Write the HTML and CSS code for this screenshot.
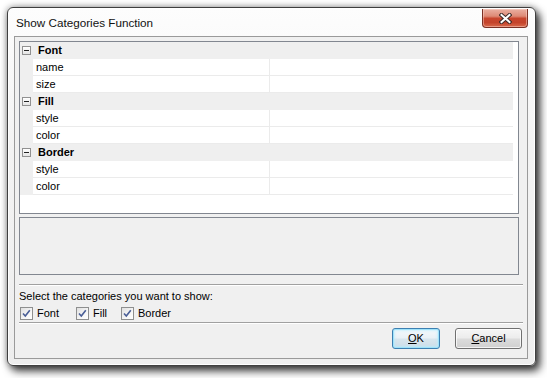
FILE: index.html
```html
<!DOCTYPE html>
<html>
<head>
<meta charset="utf-8">
<link rel="stylesheet" href="styles.css">
</head>
<body>
<div class="page">
  <div class="window">
    <div class="titlebar">
      <span class="title">Show Categories Function</span>
      <div class="close">
        <svg width="13" height="11" viewBox="0 0 13 11">
          <path d="M2.5 2 L10.5 9 M10.5 2 L2.5 9" stroke="#3b2a28" stroke-width="4" stroke-linecap="square" fill="none"/>
          <path d="M2.5 2 L10.5 9 M10.5 2 L2.5 9" stroke="#ffffff" stroke-width="2" stroke-linecap="square" fill="none"/>
        </svg>
      </div>
    </div>
    <div class="client">
      <div class="grid">
        <div class="cat"><span class="toggle"></span><span class="cat-label">Font</span></div>
        <div class="prop"><span class="gutter"></span><span class="pname">name</span><span class="pvalue"></span></div>
        <div class="prop"><span class="gutter"></span><span class="pname">size</span><span class="pvalue"></span></div>
        <div class="cat"><span class="toggle"></span><span class="cat-label">Fill</span></div>
        <div class="prop"><span class="gutter"></span><span class="pname">style</span><span class="pvalue"></span></div>
        <div class="prop"><span class="gutter"></span><span class="pname">color</span><span class="pvalue"></span></div>
        <div class="cat"><span class="toggle"></span><span class="cat-label">Border</span></div>
        <div class="prop"><span class="gutter"></span><span class="pname">style</span><span class="pvalue"></span></div>
        <div class="prop"><span class="gutter"></span><span class="pname">color</span><span class="pvalue"></span></div>
      </div>
      <div class="desc"></div>
      <div class="sep sep-top"></div>
      <div class="prompt">Select the categories you want to show:</div>
      <div class="checks">
        <label class="check check-font"><span class="box"><svg width="11" height="11" viewBox="0 0 11 11"><path d="M2 5.5 L4.3 8 L8.8 2.2" stroke="#4a5f97" stroke-width="1.6" fill="none"/></svg></span>Font</label>
        <label class="check check-fill"><span class="box"><svg width="11" height="11" viewBox="0 0 11 11"><path d="M2 5.5 L4.3 8 L8.8 2.2" stroke="#4a5f97" stroke-width="1.6" fill="none"/></svg></span>Fill</label>
        <label class="check check-border"><span class="box"><svg width="11" height="11" viewBox="0 0 11 11"><path d="M2 5.5 L4.3 8 L8.8 2.2" stroke="#4a5f97" stroke-width="1.6" fill="none"/></svg></span>Border</label>
      </div>
      <div class="sep sep-bottom"></div>
      <div class="buttons">
        <div class="btn btn-ok"><u>O</u>K</div>
        <div class="btn btn-cancel"><u>C</u>ancel</div>
      </div>
    </div>
  </div>
</div>
</body>
</html>
```
FILE: styles.css
```css
html, body {
  margin: 0;
  padding: 0;
  background: #ffffff;
  overflow: hidden;
}
.page {
  width: 547px;
  height: 378px;
  padding: 7px 0 0 7px;
  box-sizing: border-box;
  font-family: "Liberation Sans", Arial, sans-serif;
  font-size: 11px;
  color: #000;
}
.window {
  width: 529px;
  height: 359px;
  box-sizing: border-box;
  border: 1px solid #3f3f3f;
  border-radius: 6px;
  background: linear-gradient(to bottom, #fdfdfd 0%, #f3f3f3 40%, #eeeeee 100%);
  box-shadow: 4px 5px 9px rgba(0,0,0,0.75), 0 0 7px rgba(0,0,0,0.4), inset 0 0 0 1px rgba(255,255,255,0.9);
  display: flex;
  flex-direction: column;
  padding: 0 7px 6px 6px;
}
.titlebar {
  height: 28px;
  display: flex;
  align-items: flex-start;
  padding-left: 2px;
}
.title {
  margin-top: 8px;
  line-height: 14px;
  font-size: 11.7px;
  color: #111;
}
.close {
  margin-left: auto;
  margin-top: 1px;
  width: 46px;
  height: 19px;
  box-sizing: border-box;
  border: 1px solid #7b3024;
  border-top: none;
  border-radius: 0 0 4px 4px;
  background: linear-gradient(to bottom, #eab0a2 0%, #de8a76 40%, #c8462e 52%, #c4432b 75%, #d96a4c 100%);
  display: flex;
  align-items: center;
  justify-content: center;
  box-shadow: inset 0 0 0 1px rgba(255,220,210,0.45);
}
.client {
  flex: 1;
  border: 1px solid #9a9a9a;
  background: #f0f0f0;
  padding: 4px 8px 0 4px;
  display: flex;
  flex-direction: column;
}
.grid {
  height: 173px;
  box-sizing: border-box;
  border: 1px solid #828790;
  background: #ffffff;
  padding-right: 5px;
  display: flex;
  flex-direction: column;
}
.cat {
  height: 17px;
  background: #efefef;
  display: flex;
  align-items: center;
}
.toggle {
  width: 9px;
  height: 9px;
  box-sizing: border-box;
  margin-left: 2px;
  border: 1px solid #919191;
  background: linear-gradient(to bottom, #ffffff, #e4e4e4);
  position: relative;
}
.toggle::after {
  content: "";
  position: absolute;
  left: 1px;
  right: 1px;
  top: 3px;
  height: 1px;
  background: #222;
}
.cat-label {
  margin-left: 7px;
  font-weight: bold;
  line-height: 17px;
}
.prop {
  height: 17px;
  display: flex;
}
.gutter {
  width: 13px;
  background: #efefef;
}
.pname {
  width: 237px;
  box-sizing: border-box;
  padding-left: 3px;
  line-height: 16px;
  border-right: 1px solid #ebebeb;
  border-bottom: 1px solid #ebebeb;
}
.pvalue {
  flex: 1;
  border-bottom: 1px solid #ebebeb;
}
.desc {
  margin-top: 3px;
  height: 58px;
  box-sizing: border-box;
  border: 1px solid #828790;
  background: #f0f0f0;
}
.sep {
  height: 0;
  border-top: 1px solid #a0a0a0;
  border-bottom: 1px solid #ffffff;
  margin-right: -4px;
}
.sep-top {
  margin-top: 9px;
}
.prompt {
  margin-top: 4px;
  line-height: 13px;
}
.checks {
  margin-top: 4px;
  height: 13px;
  display: flex;
  align-items: center;
  padding-left: 1px;
}
.check {
  display: flex;
  align-items: center;
  line-height: 13px;
}
.check-font { width: 56px; }
.check-fill { width: 45px; }
.box {
  width: 13px;
  height: 13px;
  box-sizing: border-box;
  border: 1px solid #8e8f8f;
  background: linear-gradient(135deg, #e0e0e0 0%, #f6f6f6 60%, #ffffff 100%);
  margin-right: 4px;
  display: flex;
  align-items: center;
  justify-content: center;
}
.sep-bottom {
  margin-top: 2px;
}
.buttons {
  margin-top: 4px;
  margin-right: -3px;
  display: flex;
  justify-content: flex-end;
  gap: 15px;
}
.btn {
  height: 21px;
  box-sizing: border-box;
  border: 1px solid #707070;
  border-radius: 3px;
  background: linear-gradient(to bottom, #f6f6f6 0%, #ececec 48%, #dcdcdc 52%, #d0d0d0 100%);
  box-shadow: inset 0 0 0 1px rgba(255,255,255,0.75);
  display: flex;
  align-items: center;
  justify-content: center;
  line-height: 13px;
}
.btn-ok {
  width: 48px;
  border-color: #3c7fb1;
  background: linear-gradient(to bottom, #f4f9fc 0%, #e9f1f6 48%, #d8e6ee 52%, #cddde8 100%);
  box-shadow: inset 0 0 0 1px #9fe2fa, inset 0 0 2px 2px rgba(180,235,252,0.6);
}
.btn-cancel {
  width: 67px;
}
```
